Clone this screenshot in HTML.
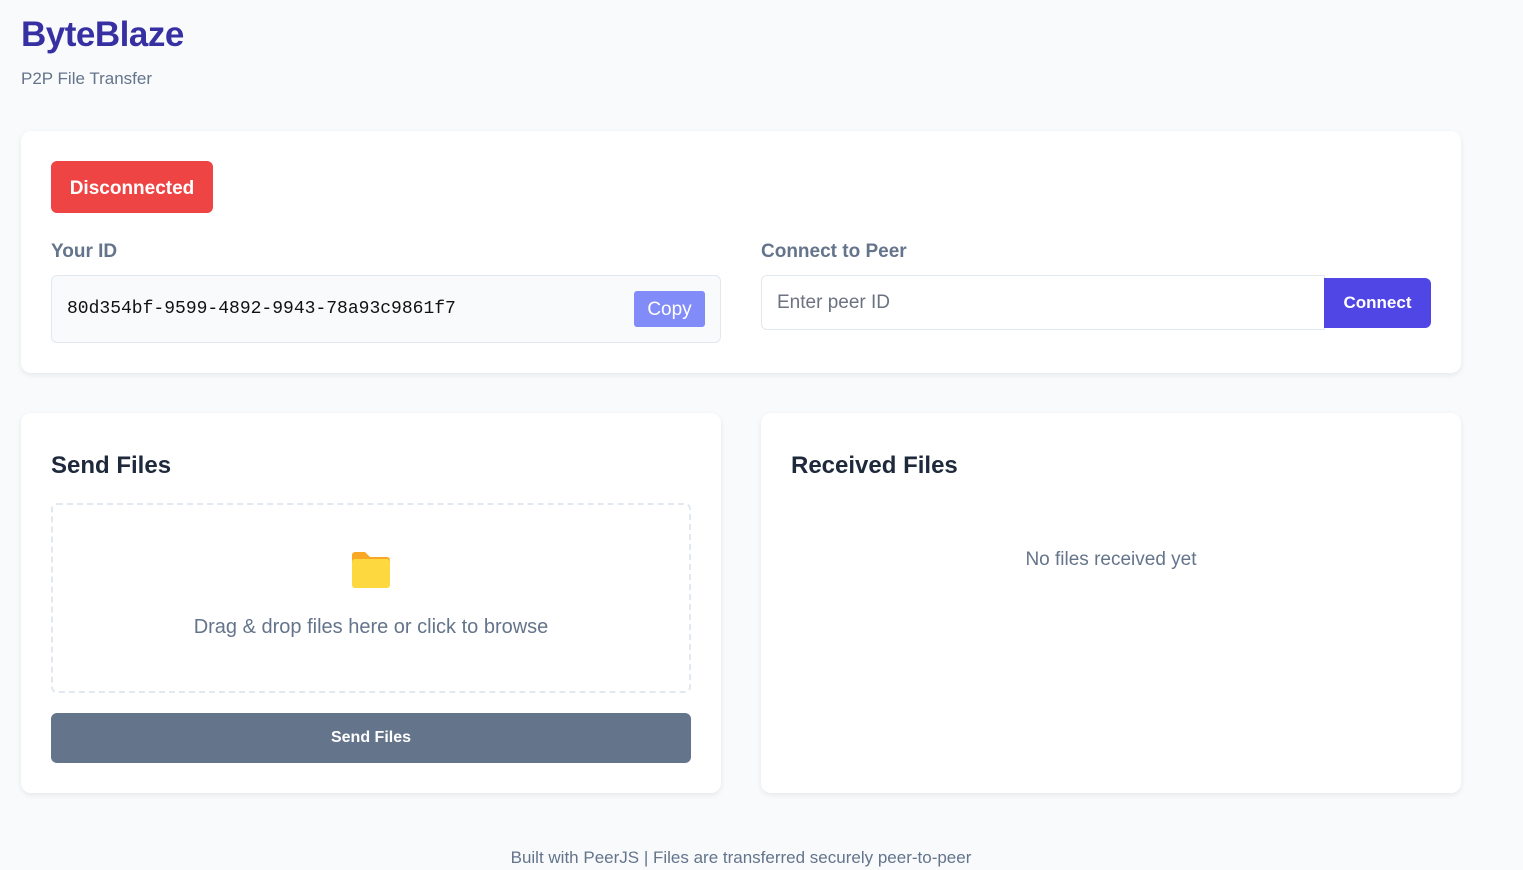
<!DOCTYPE html>
<html><head><meta charset="utf-8"><style>
*{box-sizing:border-box;margin:0;padding:0}
body{width:1523px;height:870px;background:#f8fafc;font-family:"Liberation Sans",sans-serif;position:relative;overflow:hidden;color:#1e293b}
.abs{position:absolute}
.card{position:absolute;background:#fff;border-radius:10px;box-shadow:0 2px 6px rgba(0,0,0,0.08)}
</style></head><body>
<div class="abs" style="left:21px;top:15px;font-size:35px;font-weight:bold;color:#3730a3;letter-spacing:-0.5px">ByteBlaze</div>
<div class="abs" style="left:21px;top:69px;font-size:17px;color:#64748b">P2P File Transfer</div>

<div class="card" style="left:21px;top:131px;width:1440px;height:242px">
  <div class="abs" style="left:30px;top:30px;width:162px;height:52px;background:#ef4444;border-radius:6px;color:#fff;font-size:19px;font-weight:bold;text-align:center;line-height:56px">Disconnected</div>
  <div class="abs" style="left:30px;top:110px;font-size:19px;font-weight:bold;color:#64748b">Your ID</div>
  <div class="abs" style="left:30px;top:144px;width:670px;height:68px;background:#f8fafc;border:1px solid #e2e8f0;border-radius:6px">
    <div class="abs" style="left:15px;top:23px;font-family:'Liberation Mono',monospace;font-size:18px;color:#111">80d354bf-9599-4892-9943-78a93c9861f7</div>
    <div class="abs" style="left:582px;top:15px;width:71px;height:36px;background:#818cf8;border-radius:3px;color:#fff;font-size:19px;text-align:center;line-height:38px">Copy</div>
  </div>
  <div class="abs" style="left:740px;top:110px;font-size:19px;font-weight:bold;color:#64748b">Connect to Peer</div>
  <div class="abs" style="left:740px;top:144px;width:564px;height:55px;border:1px solid #e2e8f0;border-radius:6px 0 0 6px;background:#fff">
    <div class="abs" style="left:15px;top:16px;font-size:19px;color:#6b7280">Enter peer ID</div>
  </div>
  <div class="abs" style="left:1303px;top:147px;width:107px;height:50px;background:#4f46e5;border-radius:0 6px 6px 0;color:#fff;font-size:17px;font-weight:bold;text-align:center;line-height:50px">Connect</div>
</div>

<div class="card" style="left:21px;top:413px;width:700px;height:380px">
  <div class="abs" style="left:30px;top:39px;font-size:24px;font-weight:bold;color:#1e293b">Send Files</div>
  <div class="abs" style="left:30px;top:90px;width:640px;height:190px;border:2px dashed #e2e8f0;border-radius:6px">
    <svg class="abs" style="left:297px;top:46px" width="42" height="38" viewBox="0 0 42 38"><path d="M2 4a3 3 0 0 1 3-3h10l5 5h17a3 3 0 0 1 3 3v4H2z" fill="#f9a825"/><rect x="2" y="8" width="38" height="29" rx="3" fill="#fdd83f"/></svg>
    <div class="abs" style="left:0;width:636px;top:111px;text-align:center;font-size:20px;color:#64748b">Drag &amp; drop files here or click to browse</div>
  </div>
  <div class="abs" style="left:30px;top:300px;width:640px;height:50px;background:#64748b;border-radius:6px;color:#fff;font-size:16px;font-weight:bold;text-align:center;line-height:50px">Send Files</div>
</div>

<div class="card" style="left:761px;top:413px;width:700px;height:380px">
  <div class="abs" style="left:30px;top:39px;font-size:24px;font-weight:bold;color:#1e293b">Received Files</div>
  <div class="abs" style="left:0;width:700px;top:136px;text-align:center;font-size:19px;color:#64748b">No files received yet</div>
</div>

<div class="abs" style="left:0;width:1482px;top:848px;text-align:center;font-size:17px;color:#64748b">Built with PeerJS | Files are transferred securely peer-to-peer</div>
</body></html>
